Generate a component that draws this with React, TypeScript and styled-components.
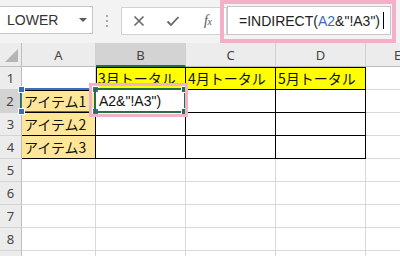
import React from 'react';
import styled, { createGlobalStyle } from 'styled-components';

const Global = createGlobalStyle`
  html, body { margin: 0; padding: 0; background: #fff; overflow: hidden; }
  body { font-family: "Liberation Sans", Arial, sans-serif; }
`;

const Page = styled.div`
  width: 400px;
  height: 256px;
  overflow: hidden;
  position: relative;
  display: flex;
  flex-direction: column;
  background: #fff;
`;

const Toolbar = styled.div`
  height: 43px;
  flex: none;
  box-sizing: border-box;
  background: #f3f3f3;
  display: flex;
  align-items: flex-start;
  padding-top: 6px;
`;

const NameBox = styled.div`
  width: 93px;
  height: 28px;
  flex: none;
  box-sizing: border-box;
  background: #fff;
  border: 1px solid #c6c6c6;
  border-left: none;
  display: flex;
  align-items: center;
  justify-content: space-between;
  padding: 0 5px 0 7px;
  font-size: 14px;
  color: #333;
`;

const DropArrow = styled.span`
  width: 0;
  height: 0;
  border-left: 4px solid transparent;
  border-right: 4px solid transparent;
  border-top: 4px solid #5a5a5a;
`;

const Dots = styled.div`
  width: 2px;
  margin: 9px 0 0 13px;
  display: flex;
  flex-direction: column;
  gap: 3px;
  & > i {
    display: block;
    width: 2px;
    height: 2px;
    background: #a8a8a8;
  }
`;

const FxButtons = styled.div`
  width: 106px;
  height: 28px;
  margin: 1px 0 0 13px;
  box-sizing: border-box;
  background: #fff;
  border: 1px solid #d2d2d2;
  display: flex;
  align-items: center;
  padding-left: 11px;
  gap: 21px;
`;

const FxLabel = styled.span`
  font-family: "Liberation Serif", "DejaVu Serif", serif;
  font-style: italic;
  font-size: 14px;
  color: #555;
  letter-spacing: -0.5px;
  margin-left: 3px;
  & small { font-size: 10px; }
`;

const FormulaInput = styled.div`
  width: 164px;
  height: 29px;
  box-sizing: border-box;
  background: #fff;
  border: 1px solid #c6c6c6;
  display: flex;
  align-items: center;
  padding-left: 11px;
  font-size: 14px;
  color: #222;
  white-space: nowrap;
`;

const Ref = styled.span`
  color: #3b6cc0;
`;

const Caret = styled.span`
  display: inline-block;
  width: 1px;
  height: 17px;
  background: #000;
  margin-left: 3px;
`;

const Sheet = styled.div`
  position: relative;
  flex: 1;
  overflow: hidden;
  display: grid;
  grid-template-columns: 22px 74px 90px 90px 90px 64px;
  grid-template-rows: 24px repeat(9, 23px);
  background: #fff;
`;

const Corner = styled.div`
  box-sizing: border-box;
  background: #ececec;
  border-right: 1px solid #bdbdbd;
  border-bottom: 1px solid #bdbdbd;
  position: relative;
  &::after {
    content: '';
    position: absolute;
    right: 3px;
    bottom: 4px;
    width: 0;
    height: 0;
    border-left: 13px solid transparent;
    border-bottom: 13px solid #b5b5b5;
  }
`;

const ColHead = styled.div<{ $sel?: boolean }>`
  box-sizing: border-box;
  background: ${p => (p.$sel ? '#d3d3d3' : '#ececec')};
  border-right: 1px solid #d0d0d0;
  border-bottom: ${p => (p.$sel ? '2px solid #217346' : '1px solid #bdbdbd')};
  display: flex;
  align-items: center;
  justify-content: center;
  font-family: "Noto Sans", "Liberation Sans", sans-serif;
  font-size: 13px;
  color: #444;
  padding-top: 1px;
`;

const RowHead = styled.div<{ $sel?: boolean }>`
  box-sizing: border-box;
  background: ${p => (p.$sel ? '#d3d3d3' : '#ececec')};
  border-right: ${p => (p.$sel ? '2px solid #217346' : '1px solid #bdbdbd')};
  border-bottom: 1px solid #d4d4d4;
  display: flex;
  align-items: center;
  justify-content: center;
  font-family: "Noto Sans", "Liberation Sans", sans-serif;
  font-size: 13px;
  color: #444;
`;

const Cell = styled.div<{ $fill?: string; $r?: boolean; $b?: boolean; $t?: boolean; $l?: boolean }>`
  box-sizing: border-box;
  background: ${p => p.$fill || '#fff'};
  border-right: 1px solid ${p => (p.$r ? '#000' : '#d9d9d9')};
  border-bottom: 1px solid ${p => (p.$b ? '#000' : '#d9d9d9')};
  box-shadow: ${p =>
    [p.$t ? 'inset 0 1px 0 #000' : '', p.$l ? 'inset 1px 0 0 #000' : '']
      .filter(Boolean)
      .join(', ') || 'none'};
  display: flex;
  align-items: center;
  padding-left: 2px;
  font-family: "Noto Sans CJK JP", "Noto Sans", sans-serif;
  font-size: 14px;
  color: #111;
  white-space: nowrap;
  overflow: hidden;
`;

const EditText = styled.span`
  font-family: "Liberation Sans", Arial, sans-serif;
  font-size: 14px;
  padding-left: 1px;
`;

const RefBox = styled.div`
  position: absolute;
  left: 21px;
  top: 45px;
  width: 75px;
  height: 24px;
  box-sizing: border-box;
  border: 1px solid #3a6cc4;
  border-top-width: 2px;
  pointer-events: none;
`;

const ActiveBox = styled.div`
  position: absolute;
  left: 94px;
  top: 45px;
  width: 92px;
  height: 25px;
  box-sizing: border-box;
  border: 2px solid #217346;
  pointer-events: none;
`;

const Handle = styled.span<{ $c: string }>`
  position: absolute;
  width: 5px;
  height: 5px;
  background: ${p => p.$c};
  border: 1px solid #fff;
  box-sizing: content-box;
`;

const Highlight = styled.div<{ $w: number }>`
  position: absolute;
  box-sizing: border-box;
  border: ${p => p.$w}px solid #f4b0c8;
  pointer-events: none;
`;

const TopWrap = styled.div`
  position: relative;
  display: flex;
  flex-direction: column;
  width: 400px;
  height: 256px;
`;

const XIcon = () => (
  <svg width="12" height="12" viewBox="0 0 12 12">
    <path d="M1.5 1.5L10.5 10.5M10.5 1.5L1.5 10.5" stroke="#666" strokeWidth="1.6" fill="none" />
  </svg>
);

const CheckIcon = () => (
  <svg width="14" height="12" viewBox="0 0 14 12">
    <path d="M1.5 6.5L5 10L12.5 2" stroke="#666" strokeWidth="1.8" fill="none" />
  </svg>
);

const cols = ['A', 'B', 'C', 'D', 'E'];

export default function App() {
  const rows: React.ReactNode[] = [];
  for (let r = 1; r <= 9; r++) {
    rows.push(
      <RowHead key={`rh${r}`} $sel={r === 2}>
        {r <= 8 ? r : null}
      </RowHead>
    );
    for (let c = 0; c < 5; c++) {
      const inTable = (c >= 1 && c <= 3 && r >= 1 && r <= 4) || (c === 0 && r >= 2 && r <= 4);
      let fill: string | undefined;
      let content: React.ReactNode = null;
      if (r === 1 && c >= 1 && c <= 3) {
        fill = '#ffff00';
        content = `${c + 2}月トータル`;
      }
      if (c === 0 && r >= 2 && r <= 4) {
        fill = '#ffe699';
        content = `アイテム${r - 1}`;
      }
      if (c === 1 && r === 2) {
        content = <EditText>A2&amp;"!A3")</EditText>;
      }
      rows.push(
        <Cell
          key={`c${r}-${c}`}
          $fill={fill}
          $r={inTable}
          $b={inTable}
          $t={inTable && (r === 1 || (c === 0 && r === 2))}
          $l={inTable && c === 1 && r === 1}
        >
          {content}
        </Cell>
      );
    }
  }

  return (
    <Page>
      <Global />
      <TopWrap>
        <Toolbar>
          <NameBox>
            LOWER
            <DropArrow />
          </NameBox>
          <Dots>
            <i />
            <i />
            <i />
          </Dots>
          <FxButtons>
            <XIcon />
            <CheckIcon />
            <FxLabel>
              f<small>x</small>
            </FxLabel>
          </FxButtons>
          <FormulaInput>
            =INDIRECT(<Ref>A2</Ref>&amp;"!A3")
            <Caret />
          </FormulaInput>
        </Toolbar>
        <Sheet>
          <Corner />
          {cols.map(c => (
            <ColHead key={c} $sel={c === 'B'}>
              {c}
            </ColHead>
          ))}
          {rows}
          <RefBox>
            <Handle $c="#3a6cc4" style={{ left: -4, top: -4 }} />
            <Handle $c="#3a6cc4" style={{ right: -4, top: -4 }} />
            <Handle $c="#3a6cc4" style={{ left: -4, bottom: -4 }} />
            <Handle $c="#3a6cc4" style={{ right: -4, bottom: -4 }} />
          </RefBox>
          <ActiveBox>
            <Handle $c="#217346" style={{ right: -4, top: -4 }} />
            <Handle $c="#217346" style={{ right: -4, bottom: -4 }} />
          </ActiveBox>
          <Highlight $w={3} style={{ left: 89, top: 40, width: 99, height: 34 }} />
        </Sheet>
        <Highlight $w={4} style={{ left: 220, top: 0, width: 176, height: 43 }} />
      </TopWrap>
    </Page>
  );
}
